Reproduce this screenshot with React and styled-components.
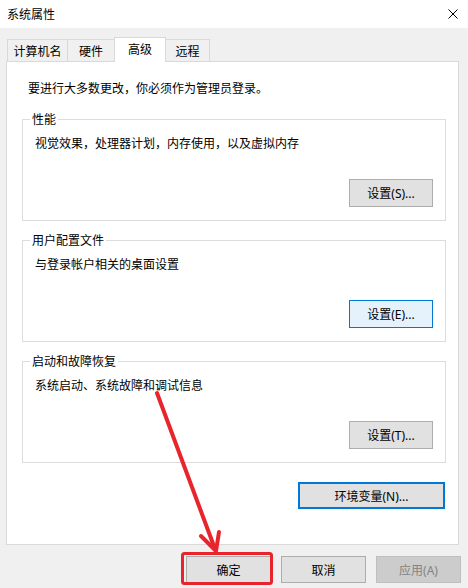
import React from 'react';
import styled, { createGlobalStyle, css } from 'styled-components';

const Global = createGlobalStyle`
  html, body { margin: 0; padding: 0; background: #f0f0f0; }
  body {
    font-family: "Noto Sans CJK SC", "Noto Sans", sans-serif;
    font-size: 12px;
    color: #000;
  }
  * { box-sizing: border-box; }
`;

const Window = styled.div`
  position: relative;
  width: 468px;
  height: 588px;
  background: #f0f0f0;
  overflow: hidden;
  font-family: "Noto Sans CJK SC", "Noto Sans", sans-serif;
  font-size: 12px;
  line-height: 16px;
  color: #000;
`;

const TitleBar = styled.div`
  height: 28px;
  background: #fff;
  display: flex;
  align-items: center;
  justify-content: space-between;
  padding: 0 10px 0 7px;
`;

const Title = styled.span`
  font-size: 12px;
`;

const Body = styled.div`
  padding: 9px 0 0 6px;
`;

const TabStrip = styled.div`
  position: relative;
  z-index: 1;
  display: flex;
  align-items: flex-end;
  height: 25px;
  padding-left: 1px;
  margin-bottom: -1px;
`;

const Tab = styled.div`
  width: ${p => p.$w}px;
  display: flex;
  align-items: center;
  justify-content: center;
  border: 1px solid #d9d9d9;
  border-bottom: none;
  background: #f0f0f0;
  height: 22px;
  margin-bottom: 1px;
  & + & { margin-left: -1px; }
  ${p => p.$active && css`
    position: relative;
    z-index: 2;
    height: 25px;
    margin-bottom: 0;
    background: #fff;
    padding-bottom: 3px;
  `}
`;

const Panel = styled.div`
  width: 453px;
  height: 484px;
  background: #fff;
  border: 1px solid #d9d9d9;
  padding: 18px 12px 0 15px;
`;

const Notice = styled.div`
  margin-left: 6px;
`;

const Group = styled.fieldset`
  margin: ${p => p.$top}px 0 0 0;
  min-width: 0;
  width: 424px;
  border: 1px solid #dcdcdc;
  padding: 0 12px 13px 7px;
`;

const Legend = styled.legend`
  padding: 0 2px;
  line-height: 16px;
  font-size: 12px;
`;

const Desc = styled.div`
  margin: 8px 0 0 5px;
`;

const ButtonRow = styled.div`
  display: flex;
  justify-content: flex-end;
  margin-top: ${p => p.$top || 0}px;
  padding-right: ${p => p.$right || 0}px;
`;

const Button = styled.button`
  width: ${p => p.$w || 84}px;
  height: ${p => p.$h || 28}px;
  padding: 0;
  margin: 0;
  font-family: "Segoe UI", "Noto Sans", "Noto Sans CJK SC", sans-serif;
  font-size: 12px;
  color: #000;
  background: #e1e1e1;
  border: 1px solid #adadad;
  border-radius: 0;
  display: flex;
  align-items: center;
  justify-content: center;
  ${p => p.$variant === 'hover' && css`
    background: #e5f1fb;
    border-color: #0078d7;
  `}
  ${p => p.$variant === 'focus' && css`
    border: 2px solid #0078d7;
  `}
  ${p => p.$variant === 'disabled' && css`
    background: #cccccc;
    border-color: #bfbfbf;
    color: #838383;
  `}
`;

const Footer = styled.div`
  display: flex;
  justify-content: flex-end;
  gap: 10px;
  margin-top: 11px;
  padding-right: 7px;
`;

const Overlay = styled.svg`
  position: absolute;
  left: 0;
  top: 0;
  pointer-events: none;
`;

function CloseIcon() {
  return (
    <svg width="10" height="10" viewBox="0 0 10 10">
      <path d="M0.5 0.5 L9.5 9.5 M9.5 0.5 L0.5 9.5" stroke="#000" strokeWidth="1" fill="none" />
    </svg>
  );
}

export default function App() {
  return (
    <>
      <Global />
      <Window>
        <TitleBar>
          <Title>系统属性</Title>
          <CloseIcon />
        </TitleBar>
        <Body>
          <TabStrip>
            <Tab $w={61}>计算机名</Tab>
            <Tab $w={48}>硬件</Tab>
            <Tab $w={52} $active>高级</Tab>
            <Tab $w={45}>远程</Tab>
          </TabStrip>
          <Panel>
            <Notice>要进行大多数更改，你必须作为管理员登录。</Notice>
            <Group $top={15}>
              <Legend>性能</Legend>
              <Desc>视觉效果，处理器计划，内存使用，以及虚拟内存</Desc>
              <ButtonRow $top={28}>
                <Button>设置(S)...</Button>
              </ButtonRow>
            </Group>
            <Group $top={11}>
              <Legend>用户配置文件</Legend>
              <Desc>与登录帐户相关的桌面设置</Desc>
              <ButtonRow $top={28}>
                <Button $variant="hover">设置(E)...</Button>
              </ButtonRow>
            </Group>
            <Group $top={11}>
              <Legend>启动和故障恢复</Legend>
              <Desc>系统启动、系统故障和调试信息</Desc>
              <ButtonRow $top={28}>
                <Button>设置(T)...</Button>
              </ButtonRow>
            </Group>
            <ButtonRow $top={19} $right={1}>
              <Button $w={147} $h={27} $variant="focus">环境变量(N)...</Button>
            </ButtonRow>
          </Panel>
          <Footer>
            <Button $w={85} $h={27}>确定</Button>
            <Button $w={85} $h={27}>取消</Button>
            <Button $w={85} $h={27} $variant="disabled">应用(A)</Button>
          </Footer>
        </Body>
        <Overlay width="468" height="588" viewBox="0 0 468 588">
          <line x1="157" y1="393" x2="215" y2="549" stroke="#e8242c" strokeWidth="4" strokeLinecap="round" />
          <polyline points="201,536 216,551 219,532" stroke="#e8242c" strokeWidth="4" fill="none" strokeLinecap="round" strokeLinejoin="round" />
          <rect x="182.5" y="553.5" width="89" height="30" rx="2" stroke="#e8242c" strokeWidth="3" fill="none" />
        </Overlay>
      </Window>
    </>
  );
}
